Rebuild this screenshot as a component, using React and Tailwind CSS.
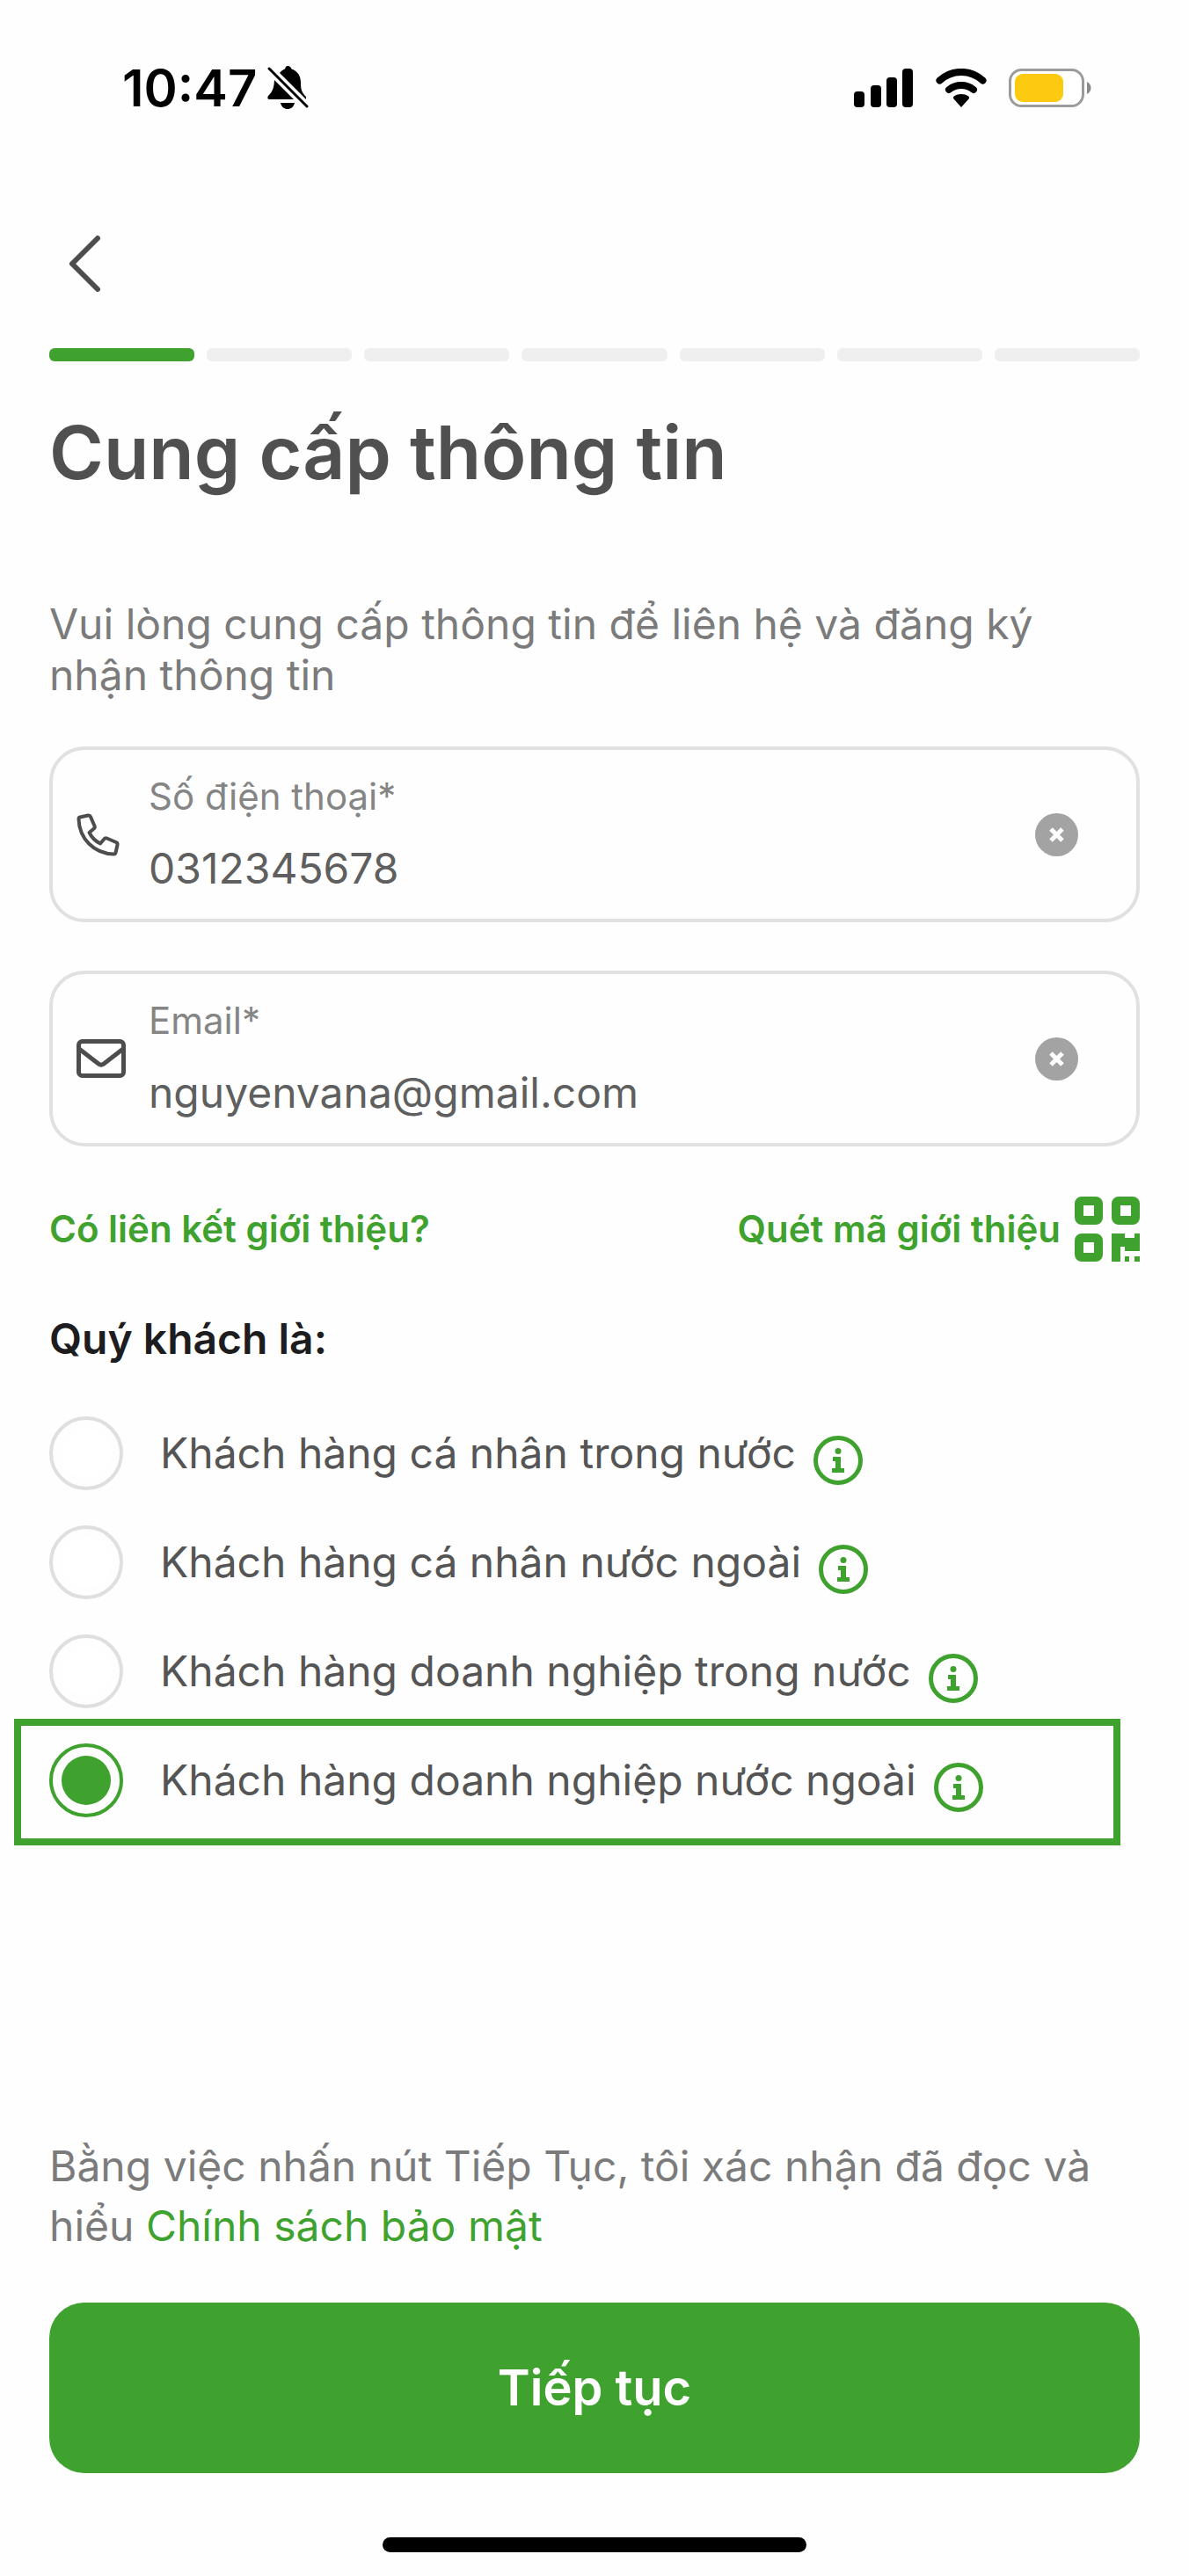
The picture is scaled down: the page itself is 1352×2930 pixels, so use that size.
import { useState } from "react";

const STEPS = 7;

const CUSTOMER_TYPES = [
  { id: "local-person", label: "Khách hàng cá nhân trong nước" },
  { id: "foreign-person", label: "Khách hàng cá nhân nước ngoài" },
  { id: "local-company", label: "Khách hàng doanh nghiệp trong nước" },
  { id: "foreign-company", label: "Khách hàng doanh nghiệp nước ngoài" },
];

function BellSlashIcon() {
  return (
    <svg width="48" height="52" viewBox="0 0 48 52" fill="#000" aria-hidden="true">
      <path d="M23 1c3 0 4 2 4.500 3.500C35 7 38 13 38 20c0 8 1 11 6 16v3L14 9c2-2.500 4.500-4 6-4.500C20.500 3 21 1 23 1Z" />
      <path d="M8 17 30 39H2c-2 0-2-3-.500-4.500C6 30 7.500 26 8 17Z" />
      <path d="M15 43h16c-1 4.500-4 7-8 7s-7-2.500-8-7Z" />
      <path d="M2 4 45 47" stroke="#000" strokeWidth="3" strokeLinecap="round" />
    </svg>
  );
}

function SignalIcon() {
  return (
    <svg width="68" height="44" viewBox="0 0 68 44" fill="#000" aria-hidden="true">
      <rect x="0" y="26" width="12" height="18" rx="4" />
      <rect x="19" y="19" width="12" height="25" rx="4" />
      <rect x="37" y="10" width="12" height="34" rx="4" />
      <rect x="55" y="0" width="12" height="44" rx="4" />
    </svg>
  );
}

function WifiIcon() {
  return (
    <svg width="58" height="44" viewBox="0 0 58 44" aria-hidden="true">
      <g fill="none" stroke="#000" strokeWidth="8" strokeLinecap="round">
        <path d="M4.500 13.500a36 36 0 0 1 49 0" />
        <path d="M15 24a22 22 0 0 1 28 0" />
      </g>
      <path d="M29 44 20.500 34.500c-1-1.500-.500-2.500.500-3.300 5-3 11-3 16 0 1 .800 1.500 1.800.500 3.300Z" />
    </svg>
  );
}

function BatteryIcon() {
  return (
    <svg width="95" height="44" viewBox="0 0 95 44" aria-hidden="true">
      <rect x="1.500" y="1.500" width="83" height="41" rx="13" fill="#fff" stroke="#9b9b9b" strokeWidth="3" />
      <rect x="7" y="6" width="55" height="32" rx="9" fill="#fcca10" />
      <path d="M89 15c6 3 6 11 0 14Z" fill="#8a8a8a" />
    </svg>
  );
}

function PhoneIcon() {
  return (
    <svg width="56" height="50" viewBox="0 0 56 50" fill="none" stroke="#4d4d4d" strokeWidth="4" strokeLinejoin="round" aria-hidden="true">
      <path d="M4 5.500 13 3.500c1.500-.300 2.500.300 3 1.500l4.500 10.500c.500 1.200.200 2.300-.700 3L14.500 23c3 6 6.500 9.500 12.500 12.500l4.500-5.300c.700-.900 1.800-1.200 3-.700L45 34c1.200.500 1.800 1.500 1.500 3l-2 9c-.300 1-.800 1.500-2 1.500C20 47 3 30 2.500 7.500c0-1.200.500-1.800 1.500-2Z" />
    </svg>
  );
}

function MailIcon() {
  return (
    <svg width="56" height="44" viewBox="0 0 56 44" fill="none" stroke="#4d4d4d" strokeWidth="5" strokeLinejoin="round" aria-hidden="true">
      <rect x="2.500" y="2.500" width="51" height="39" rx="4" />
      <path d="m3 11 22 17c2 1.500 4 1.500 6 0l22-17" />
    </svg>
  );
}

function QrIcon() {
  return (
    <svg width="74" height="74" viewBox="0 0 74 74" fill="#3fa22f" aria-hidden="true">
      <g fill="none" stroke="#3fa22f" strokeWidth="10">
        <rect x="5" y="5" width="22" height="22" rx="3" />
        <rect x="47" y="5" width="22" height="22" rx="3" />
        <rect x="5" y="47" width="22" height="22" rx="3" />
      </g>
      <path d="M42 42h15v5h11v-5h6v20H57v-5h-5v17H42Z" />
      <path d="M57 68h5v6h-5ZM68 68h6v6h-6Z" />
    </svg>
  );
}

function InfoIcon() {
  return (
    <svg width="56" height="56" viewBox="0 0 56 56" fill="#3fa22f" aria-hidden="true">
      <circle cx="28" cy="28" r="25.500" fill="none" stroke="#3fa22f" strokeWidth="5" />
      <circle cx="28" cy="17.500" r="3.500" />
      <path d="M22 24h9v13h4v5H21v-5h4v-8h-3Z" />
    </svg>
  );
}

function StatusBar() {
  return (
    <div className="flex items-center justify-between pt-[74px] pl-[139px] pr-[110px]">
      <div className="flex items-center gap-3">
        <span className="text-[58px] leading-[52px] font-semibold text-black">10:47</span>
        <BellSlashIcon />
      </div>
      <div className="flex items-center gap-[25px]">
        <SignalIcon />
        <WifiIcon />
        <BatteryIcon />
      </div>
    </div>
  );
}

function Field({ id, type, label, icon, value, onChange }) {
  return (
    <div className="flex h-[200px] items-center rounded-[40px] border-4 border-[#e1e1e1] pl-[27px] pr-[66px]">
      {icon}
      <div className="ml-[26px] flex min-w-0 flex-1 flex-col gap-[26px]">
        <label htmlFor={id} className="text-[42px] leading-[52px] text-[#858585]">{label}</label>
        <input
          id={id}
          type={type}
          value={value}
          onChange={e => onChange(e.target.value)}
          className="h-[60px] w-full bg-transparent text-[48px] leading-[60px] text-[#5f5f5f] outline-none"
        />
      </div>
      <button type="button" aria-label={`Xóa ${label}`} onClick={() => onChange("")} className="shrink-0">
        <svg width="49" height="49" viewBox="0 0 49 49" aria-hidden="true">
          <circle cx="24.500" cy="24.500" r="24.500" fill="#a3a3a3" />
          <path d="m18 18 13 13M31 18 18 31" stroke="#fff" strokeWidth="5" />
        </svg>
      </button>
    </div>
  );
}

function CustomerOption({ id, label, checked, onSelect }) {
  return (
    <div className="relative flex h-[84px] items-center">
      {/* Highlight frame round the chosen row */}
      {checked && (
        <div className="pointer-events-none absolute -top-7 -bottom-8 -left-10 right-[22px] border-8 border-[#3fa22f]" />
      )}
      <input
        id={id}
        type="radio"
        name="customer-type"
        checked={checked}
        onChange={onSelect}
        className="size-[84px] shrink-0 appearance-none rounded-full border-4 border-[#dfdfdf] bg-white bg-clip-content p-[10px] checked:border-[#3fa22f] checked:bg-[#3fa22f]"
      />
      <label htmlFor={id} className="ml-[42px] text-[48px] leading-[60px] text-[#555]">{label}</label>
      <button type="button" aria-label={`Thông tin: ${label}`} className="mt-4 ml-5 shrink-0">
        <InfoIcon />
      </button>
    </div>
  );
}

export default function App() {
  const [phone, setPhone] = useState("0312345678");
  const [email, setEmail] = useState("nguyenvana@gmail.com");
  const [customerType, setCustomerType] = useState("foreign-company");

  return (
    <div className="flex min-h-screen flex-col bg-[#fefefe] font-['Inter',sans-serif]">
      <StatusBar />

      <main className="flex flex-1 flex-col px-14">
        <button type="button" aria-label="Quay lại" className="mt-[140px] ml-5 self-start">
          <svg width="40" height="68" viewBox="0 0 40 68" fill="none" stroke="#4d4d4d" strokeWidth="6" strokeLinecap="round" strokeLinejoin="round" aria-hidden="true">
            <path d="M35 5 6 34l29 29" />
          </svg>
        </button>

        {/* Step progress */}
        <div className="mt-[62px] flex gap-[14px]">
          {Array.from({ length: STEPS }, (_, i) => (
            <div key={i} className={`h-[15px] flex-1 rounded-md ${i === 0 ? "bg-[#3fa22f]" : "bg-[#efefef]"}`} />
          ))}
        </div>

        <h1 className="mt-[52px] text-[84px] leading-[104px] font-semibold text-[#505050]">Cung cấp thông tin</h1>

        <p className="mt-[114px] text-[48px] leading-[58px] text-[#7b7b7b]">
          Vui lòng cung cấp thông tin để liên hệ và đăng ký nhận thông tin
        </p>

        <form className="flex flex-1 flex-col" onSubmit={e => e.preventDefault()}>
          <div className="mt-[52px] flex flex-col gap-[55px]">
            <Field id="phone" type="tel" label="Số điện thoại*" icon={<PhoneIcon />} value={phone} onChange={setPhone} />
            <Field id="email" type="email" label="Email*" icon={<MailIcon />} value={email} onChange={setEmail} />
          </div>

          <div className="mt-[57px] flex items-center justify-between text-[42px] leading-[52px] font-semibold text-[#3fa22f]">
            <a href="#referral">Có liên kết giới thiệu?</a>
            <a href="#scan" className="flex items-center gap-4">
              Quét mã giới thiệu
              <QrIcon />
            </a>
          </div>

          <fieldset className="mt-[58px]">
            <legend className="text-[48px] leading-[60px] font-semibold text-[#1d1d1f]">Quý khách là:</legend>
            <div className="mt-[58px] flex flex-col gap-10">
              {CUSTOMER_TYPES.map(type => (
                <CustomerOption
                  key={type.id}
                  {...type}
                  checked={customerType === type.id}
                  onSelect={() => setCustomerType(type.id)}
                />
              ))}
            </div>
          </fieldset>

          <p className="mt-auto text-[48px] leading-[68px] text-[#7b7b7b]">
            Bằng việc nhấn nút Tiếp Tục, tôi xác nhận đã đọc và hiểu{" "}
            <a href="#privacy" className="text-[#3fa22f]">Chính sách bảo mật</a>
          </p>

          <button type="submit" className="mt-[53px] h-[194px] rounded-[40px] bg-[#3fa22f] text-[56px] leading-[64px] font-semibold text-white">
            Tiếp tục
          </button>
        </form>
      </main>

      {/* Home indicator */}
      <div className="mt-[73px] mb-[27px] h-[17px] w-[482px] self-center rounded-full bg-black" />
    </div>
  );
}
